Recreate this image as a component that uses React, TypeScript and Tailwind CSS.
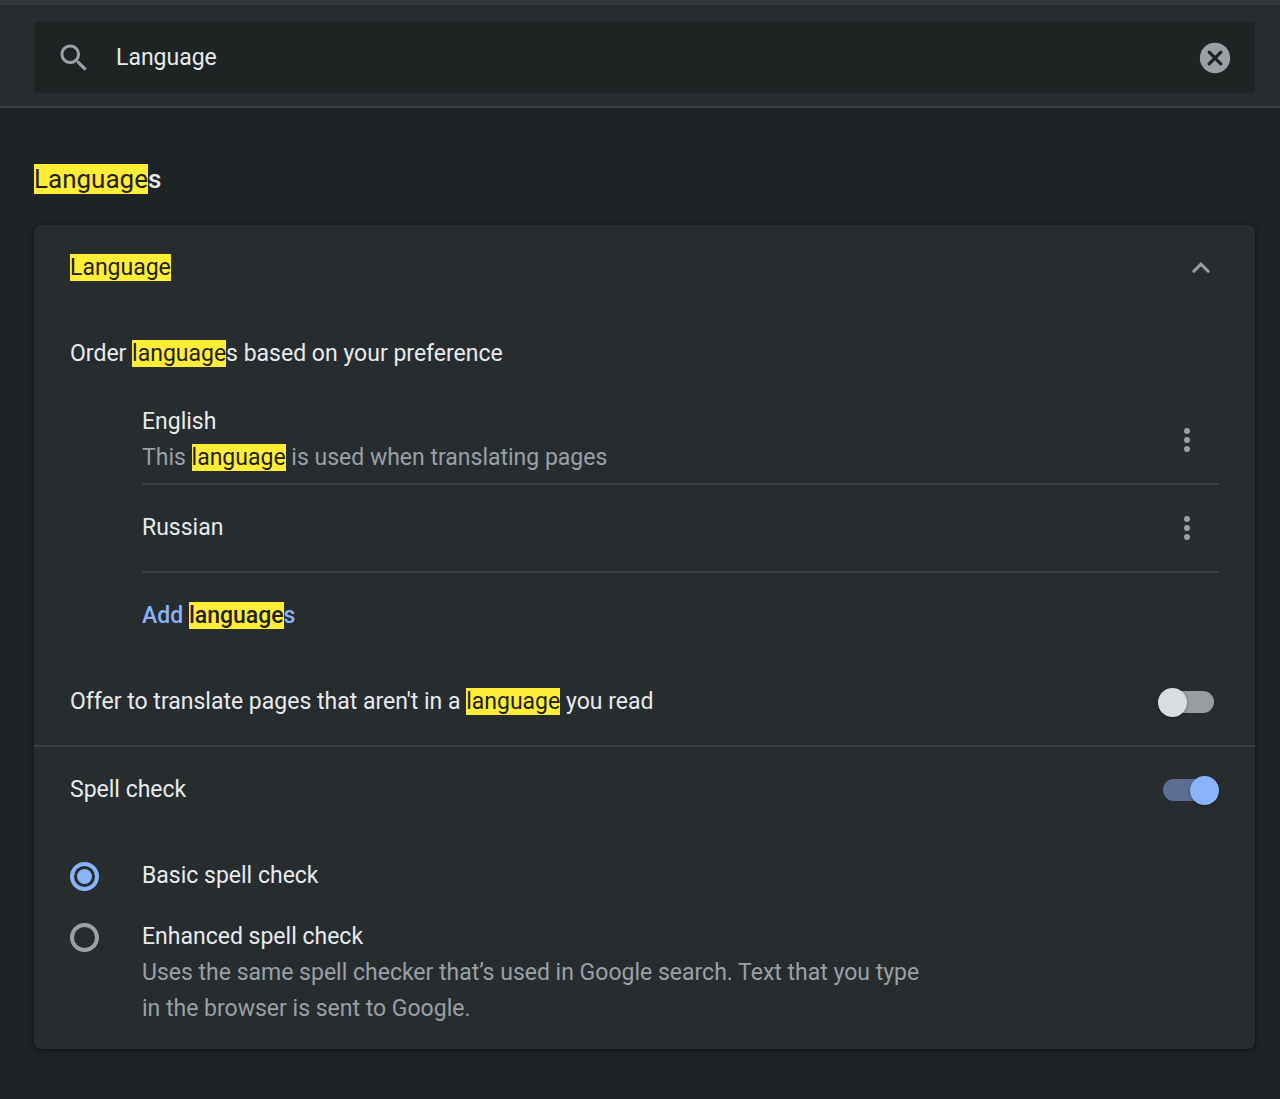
import { useState } from "react";
import type { ReactNode } from "react";

function Hit({ children }: { children: ReactNode }) {
  return <mark className="bg-[#ffee35] text-[#202124]">{children}</mark>;
}

function MoreButton({ label }: { label: string }) {
  return (
    <button type="button" aria-label={label} className="mr-3.5 size-9 shrink-0 text-[#9aa0a6]">
      <svg viewBox="0 0 24 24" className="size-9" fill="currentColor" aria-hidden="true">
        <circle cx="12" cy="6" r="2" />
        <circle cx="12" cy="12" r="2" />
        <circle cx="12" cy="18" r="2" />
      </svg>
    </button>
  );
}

function Toggle({ id, initial }: { id: string; initial: boolean }) {
  const [on, setOn] = useState(initial);
  return (
    <input
      id={id}
      type="checkbox"
      role="switch"
      checked={on}
      onChange={() => setOn(!on)}
      className="relative mr-[5px] h-[22px] w-[51px] shrink-0 cursor-pointer appearance-none rounded-full bg-[#979ea2] before:absolute before:-top-[3px] before:-left-[5px] before:size-[29px] before:rounded-full before:bg-[#d9dde0] before:shadow-[0_1px_3px_rgba(0,0,0,0.4)] checked:bg-[#5b6f95] checked:before:right-[-5px] checked:before:left-auto checked:before:bg-[#8ab4f8]"
    />
  );
}

function Radio({ id, checked, onChange }: { id: string; checked: boolean; onChange: () => void }) {
  return (
    <input
      id={id}
      type="radio"
      name="spell-check-mode"
      checked={checked}
      onChange={onChange}
      className="mt-1 grid size-[29px] shrink-0 cursor-pointer appearance-none place-content-center rounded-full border-4 border-[#9aa0a6] before:size-[15px] before:rounded-full checked:border-[#8ab4f8] checked:before:bg-[#8ab4f8]"
    />
  );
}

export default function App() {
  const [query, setQuery] = useState("Language");
  const [mode, setMode] = useState("basic");

  return (
    <div className="min-h-screen bg-[#1e2326] font-['Roboto',sans-serif] text-[23px] leading-9 text-[#e8eaed]">
      <header className="border-t-[5px] border-b-2 border-t-[#33383b] border-b-[#3a3f42] bg-[#272c2f] pt-[17px] pr-[25px] pb-[13px] pl-[34px]">
        <div className="flex h-[71px] items-center rounded bg-[#1e2323] px-[22px]">
          <svg viewBox="0 0 24 24" className="size-9 shrink-0 text-[#9aa0a6]" fill="currentColor" aria-hidden="true">
            <path d="M15.5 14h-.79l-.28-.27C15.41 12.59 16 11.11 16 9.5 16 5.91 13.09 3 9.5 3S3 5.91 3 9.5 5.91 16 9.5 16c1.61 0 3.09-.59 4.23-1.57l.27.28v.79l5 4.99L20.49 19l-4.99-5zm-6 0C7.01 14 5 11.99 5 9.5S7.01 5 9.5 5 14 7.01 14 9.5 11.99 14 9.5 14z" />
          </svg>
          <input
            type="text"
            aria-label="Search settings"
            value={query}
            onChange={(e) => setQuery(e.target.value)}
            className="ml-6 min-w-0 flex-1 bg-transparent outline-none"
          />
          <button type="button" aria-label="Clear search" onClick={() => setQuery("")} className="size-9 shrink-0">
            <svg viewBox="0 0 24 24" className="size-9" aria-hidden="true">
              <circle cx="12" cy="12" r="10.1" fill="#9aa0a6" />
              <path d="M8.1 8.1l7.8 7.8M15.9 8.1l-7.8 7.8" stroke="#1e2323" strokeWidth="2.1" strokeLinecap="round" />
            </svg>
          </button>
        </div>
      </header>

      <main className="pt-[53px] pr-[25px] pb-[50px] pl-[34px]">
        <h2 className="mb-7 text-[26px] font-medium">
          <mark className="bg-[#ffee35] font-normal text-[#202124]">Language</mark>s
        </h2>

        <section className="rounded-[7px] bg-[#272c2f] pb-[22px] shadow-[0_1px_4px_1px_rgba(0,0,0,0.4)]">
          <button type="button" className="flex h-[86px] w-full items-center justify-between px-9 text-left">
            <span>
              <Hit>Language</Hit>
            </span>
            <svg
              viewBox="0 0 24 24"
              className="size-9 text-[#9aa0a6]"
              fill="none"
              stroke="currentColor"
              strokeWidth="2"
              strokeLinecap="round"
              aria-hidden="true"
            >
              <path d="M7.2 14.2L12 9.4l4.8 4.8" />
            </svg>
          </button>

          <div className="flex h-[86px] items-center px-9">
            <p>
              Order <Hit>language</Hit>s based on your preference
            </p>
          </div>

          <ul className="mr-9 ml-[108px]">
            <li className="flex h-[88px] items-center justify-between border-b-2 border-[#3a3f42]">
              <div>
                <div>English</div>
                <div className="text-[#9aa0a6]">
                  This <Hit>language</Hit> is used when translating pages
                </div>
              </div>
              <MoreButton label="More actions, English" />
            </li>
            <li className="flex h-[88px] items-center justify-between border-b-2 border-[#3a3f42]">
              <div>Russian</div>
              <MoreButton label="More actions, Russian" />
            </li>
          </ul>
          <div className="ml-[108px] flex h-[86px] items-center">
            <button type="button" className="font-medium text-[#8ab4f8]">
              Add <Hit>language</Hit>s
            </button>
          </div>

          <div className="flex h-[88px] items-center justify-between border-b-2 border-[#3a3f42] px-9">
            <label htmlFor="offer-translate">
              Offer to translate pages that aren't in a <Hit>language</Hit> you read
            </label>
            <Toggle id="offer-translate" initial={false} />
          </div>

          <div className="flex h-[86px] items-center justify-between px-9">
            <label htmlFor="spell-check">Spell check</label>
            <Toggle id="spell-check" initial={true} />
          </div>

          <div className="mt-[25px] flex flex-col gap-[25px] px-9">
            <div className="flex items-start gap-[43px]">
              <Radio id="basic" checked={mode === "basic"} onChange={() => setMode("basic")} />
              <label htmlFor="basic">Basic spell check</label>
            </div>
            <div className="flex items-start gap-[43px]">
              <Radio id="enhanced" checked={mode === "enhanced"} onChange={() => setMode("enhanced")} />
              <label htmlFor="enhanced" className="max-w-[800px]">
                Enhanced spell check
                <span className="block text-[#9aa0a6]">
                  Uses the same spell checker that’s used in Google search. Text that you type in the browser is sent to
                  Google.
                </span>
              </label>
            </div>
          </div>
        </section>
      </main>
    </div>
  );
}
